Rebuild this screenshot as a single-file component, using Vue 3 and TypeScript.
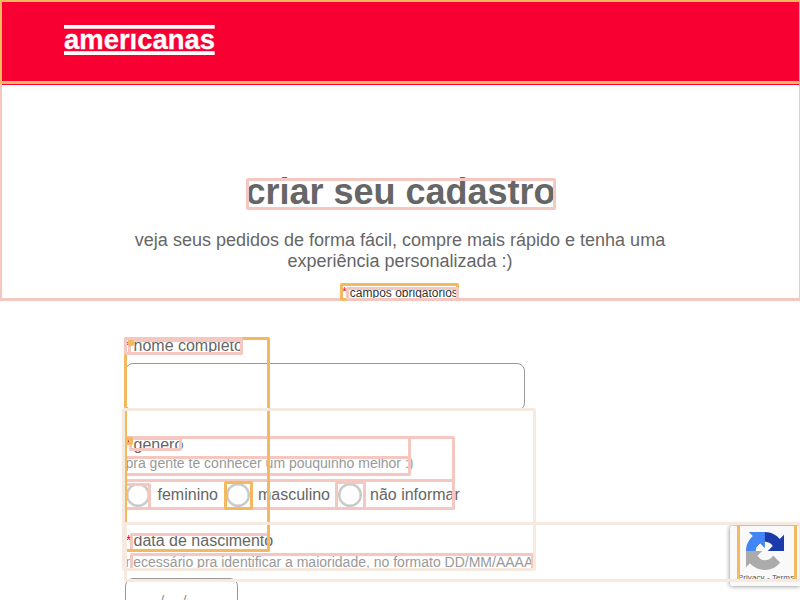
<script setup lang="ts">
type Tone = 'orange' | 'pink' | 'cream'

interface Region {
  tone: Tone
  left: number
  top: number
  right: number
  bottom: number
}

const region = (tone: Tone, left: number, top: number, right: number, bottom: number): Region => ({
  tone, left, top, right, bottom,
})

// Annotated regions, later entries are painted on top.
const regions: Region[] = [
  region('pink', -1, -1, 802, 301),
  region('orange', -1, -1, 802, 84),
  region('orange', 340, 283, 459, 301),
  region('pink', 346, 287, 459, 301),
  region('pink', 246, 178, 556, 210),
  region('pink', 128, 339, 243, 355),
  region('pink', 124, 436, 455, 510),
  region('pink', 124, 436, 411, 476),
  region('pink', 124, 456, 411, 476),
  region('pink', 129, 437, 182, 451),
  region('pink', 124, 479, 455, 510),
  region('pink', 124, 483, 151, 510),
  region('orange', 224, 481, 253, 510),
  region('pink', 335, 481, 366, 510),
  region('pink', 130, 533, 270, 552),
  region('orange', 124, 337, 270, 552),
  region('orange', 125, 437, 133, 445),
  region('pink', 124, 337, 243, 355),
  region('orange', 128, 340, 132, 346),
  region('pink', 130, 553, 534, 571),
  region('orange', 737, 523, 797, 582),
  region('cream', 122, 408, 536, 571),
  region('cream', 124, 522, 802, 582),
]

const box = (r: Region) => ({
  left: `${r.left}px`,
  top: `${r.top}px`,
  width: `${r.right - r.left}px`,
  height: `${r.bottom - r.top}px`,
})

const genders: string[] = ['feminino', 'masculino', 'não informar']
</script>

<template>
  <div class="page">
    <header class="header">
      <svg class="logo" width="152" height="30" viewBox="0 0 152 30">
        <rect x="0" y="0" width="150.7" height="3.7" />
        <text x="0" y="23.9" textLength="151" lengthAdjust="spacingAndGlyphs">amerıcanas</text>
        <rect x="0" y="26.2" width="150.7" height="3.8" />
      </svg>
    </header>

    <section class="intro">
      <h1>criar seu cadastro</h1>
      <p class="lead">veja seus pedidos de forma fácil, compre mais rápido e tenha uma experiência personalizada :)</p>
      <p class="required"><i>*</i><span>campos obrigatórios</span></p>
    </section>

    <form class="form">
      <div class="field">
        <label class="label"><i>*</i><span>nome completo</span></label>
        <div class="input"></div>
      </div>
      <div class="field gender">
        <label class="label"><i>*</i><span>gênero</span></label>
        <p class="hint">pra gente te conhecer um pouquinho melhor :)</p>
        <div class="options">
          <span v-for="g in genders" :key="g" class="option"><b class="radio"></b>{{ g }}</span>
        </div>
      </div>
      <div class="field birth">
        <label class="label"><i>*</i><span>data de nascimento</span></label>
        <p class="hint">necessário pra identificar a maioridade, no formato DD/MM/AAAA</p>
        <div class="input date">__/__/____</div>
      </div>
    </form>

    <aside class="captcha">
      <svg width="38" height="38" viewBox="0 0 64 64">
        <path fill="#1c3aa9" d="M64 31.955l-.016-1.37V4.687l-7.16 7.16C50.964 4.674 42.05.093 32.064.093c-10.392 0-19.624 4.96-25.458 12.64l11.736 11.86a15.55 15.55 0 0 1 4.754-5.334c2.05-1.6 4.952-2.906 8.968-2.906.485 0 .86.057 1.135.163 4.976.393 9.288 3.14 11.828 7.124l-8.307 8.307L64 31.953" />
        <path fill="#4285f4" d="M31.862.094l-1.37.016H4.594l7.16 7.16C4.58 13.13 0 22.043 0 32.03c0 10.392 4.96 19.624 12.64 25.458L24.5 45.752a15.55 15.55 0 0 1-5.334-4.754c-1.6-2.05-2.906-4.952-2.906-8.968 0-.485.057-.86.163-1.135.393-4.976 3.14-9.288 7.124-11.828l8.307 8.307L31.86.095" />
        <path fill="#ababab" d="M.001 32.03l.016 1.37v25.898l7.16-7.16c5.86 7.173 14.774 11.754 24.76 11.754 10.392 0 19.624-4.96 25.458-12.64L45.66 39.392a15.55 15.55 0 0 1-4.754 5.334c-2.05 1.6-4.952 2.906-8.968 2.906-.485 0-.86-.057-1.135-.163-4.976-.393-9.288-3.14-11.828-7.124l8.307-8.307c-10.522.04-22.4.066-27.28-.008" />
      </svg>
      <span>Privacy - Terms</span>
    </aside>

    <div v-for="(r, i) in regions" :key="i" class="region" :class="r.tone" :style="box(r)"></div>
  </div>
</template>

<style>
body {
  background: #fff;
  overflow: hidden;
}
</style>

<style scoped>
.page {
  position: relative;
  height: 600px;
  overflow: hidden;
  font-family: "Liberation Sans", Arial, sans-serif;
  color: #666;
}
.page * {
  box-sizing: border-box;
}
h1,
p {
  margin: 0;
}
i {
  color: #f80032;
  font-style: normal;
}
.header {
  height: 85px;
  padding: 25px 64px;
  background: #f80032;
}
.logo {
  display: block;
  overflow: visible;
  fill: #fff;
  font-size: 28px;
  font-weight: bold;
}
.logo text {
  stroke: #fff;
  stroke-width: 0.3px;
}
.intro {
  height: 252px;
  padding: 86px 125px 0;
  text-align: center;
}
h1 {
  padding-left: 1px;
  font-size: 36px;
  line-height: 42px;
}
.lead {
  margin-top: 17px;
  font-size: 18px;
  line-height: 21px;
}
.required {
  display: flex;
  justify-content: center;
  gap: 3px;
  margin-top: 14px;
  font-size: 12px;
  line-height: 14px;
  color: #333;
}
.required i {
  line-height: 12px;
}
.form {
  padding-left: 125px;
}
.label {
  display: flex;
  gap: 2.5px;
  font-size: 16px;
  line-height: 18px;
}
.label i {
  width: 6px;
  padding-left: 1px;
  font-size: 14px;
  line-height: 16px;
}
.input {
  width: 400px;
  height: 48px;
  margin-top: 8px;
  border: 1px solid #999;
  border-radius: 8px;
  background: #fff;
}
.gender {
  margin-top: 25px;
}
.hint {
  margin-top: 1px;
  padding-left: 0.5px;
  font-size: 14px;
  line-height: 16px;
  color: #999;
}
.options {
  display: flex;
  gap: 8px;
  margin-top: 12px;
  padding-left: 0.5px;
}
.option {
  display: flex;
  align-items: center;
  gap: 8px;
  height: 24px;
  font-size: 16px;
}
.radio {
  width: 24px;
  height: 24px;
  border: 2px solid #c8c8c8;
  border-radius: 50%;
  box-shadow: inset 0 0 0 0.5px #ccc;
}
.birth {
  margin-top: 25px;
}
.birth .hint {
  margin-top: 4px;
}
.date {
  width: 113px;
  margin-top: 8px;
  padding-left: 16px;
  font-size: 16px;
  line-height: 46px;
  color: #999;
}
.captcha {
  position: absolute;
  left: 730px;
  top: 526px;
  display: flex;
  flex-direction: column;
  align-items: center;
  width: 70px;
  height: 60px;
  padding-top: 6px;
  border-radius: 2px 0 0 2px;
  background: #f9f9f9;
  box-shadow: 0 0 5px gray;
}
.captcha span {
  margin-top: 3px;
  padding-left: 2px;
  font-size: 8px;
  line-height: 10px;
  letter-spacing: 0.1px;
  color: #555;
  white-space: nowrap;
}
.region {
  position: absolute;
  border: 3px solid;
  border-radius: 2px;
}
.orange {
  border-color: #f4b95f;
}
.pink {
  border-color: #f4c7c1;
}
.cream {
  border-color: #f6eae0;
}
</style>
